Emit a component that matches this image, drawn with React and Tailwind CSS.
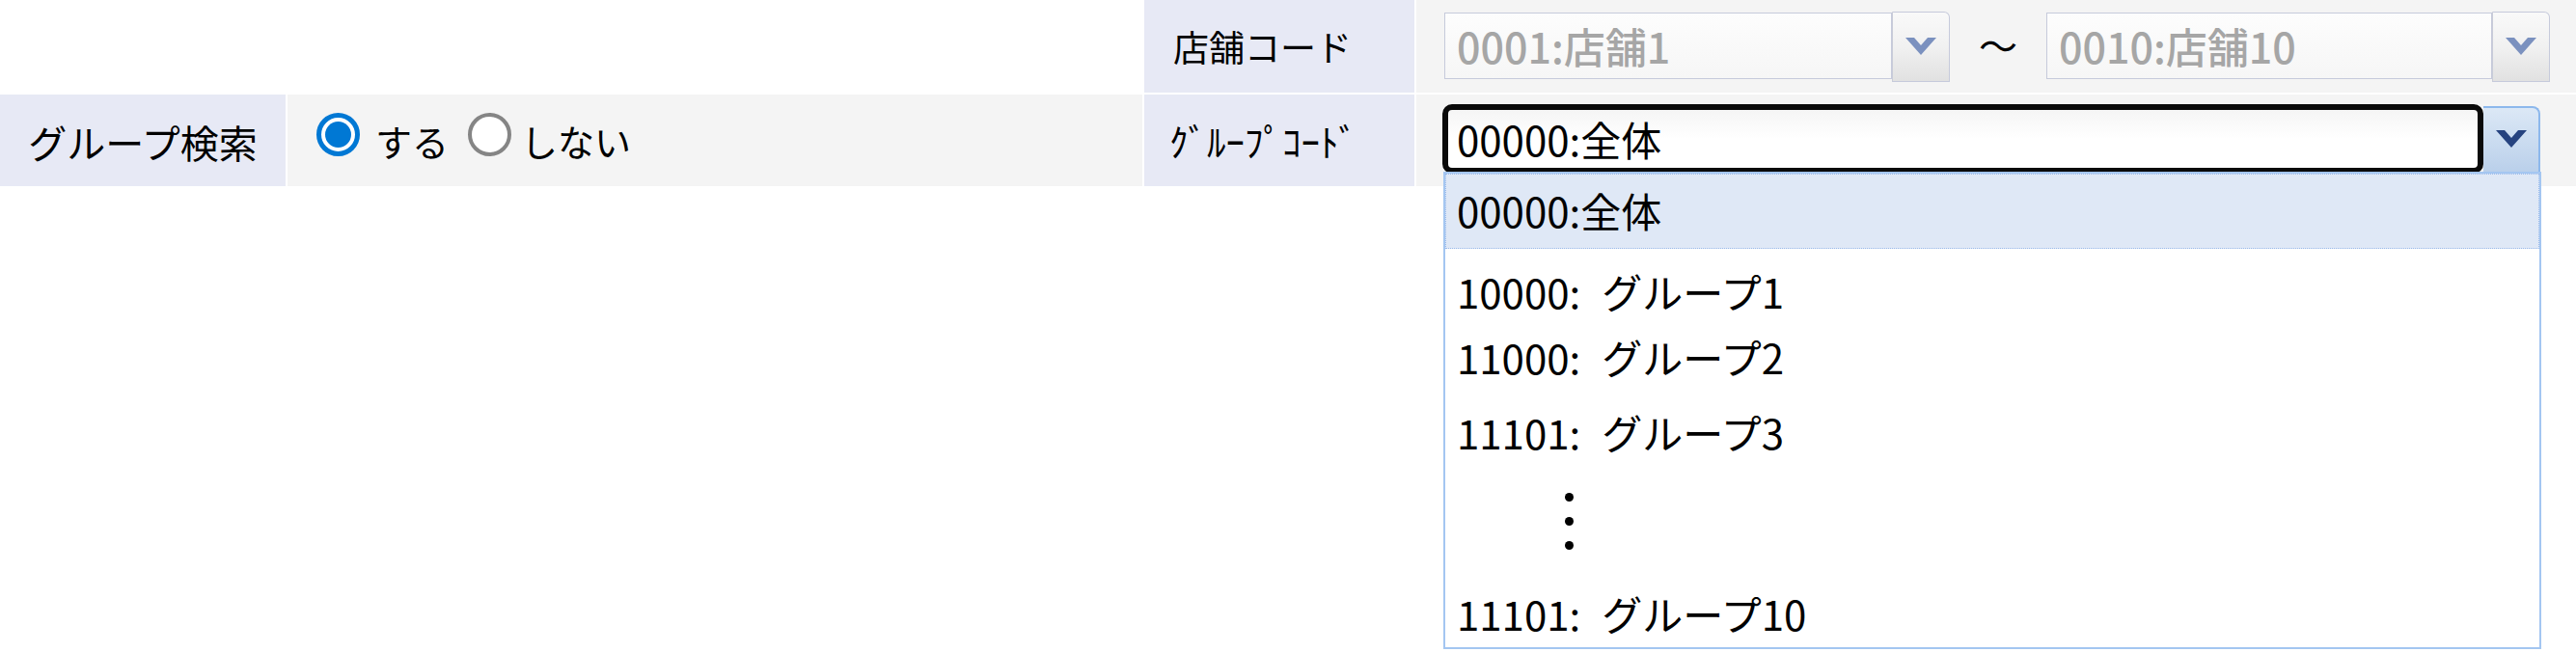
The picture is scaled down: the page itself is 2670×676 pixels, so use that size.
import React from "react";

function Chevron({ color }) {
  return (
    <svg width="32" height="18" viewBox="0 0 32 18">
      <path d="M0 0 L9 0 L16 8 L23 0 L32 0 L16 18 Z" fill={color} />
    </svg>
  );
}

function GraySelect({ text, inputW }) {
  return (
    <div className="flex items-start">
      <div
        className="mt-[1px] h-[69px] border border-[#c6cadb] bg-linear-to-b from-[#fdfdfd] to-[#f6f6f6] flex items-center pl-[12px] text-[43px] text-[#a6a6a6] font-medium leading-none"
        style={{ width: inputW }}
      >
        {text}
      </div>
      <div className="w-[60px] h-[73px] border border-[#c6cadb] border-l-[#c9ccd8] rounded-tr-[6px] bg-linear-to-b from-[#f9f9f9] via-[#f1f1f1] to-[#e1e1e1] flex items-center justify-center pb-[2px]">
        <Chevron color="#7b91bf" />
      </div>
    </div>
  );
}

function Radio({ checked }) {
  if (checked) {
    return (
      <div className="w-[45px] h-[45px] rounded-full border-[5px] border-[#0078d4] bg-white flex items-center justify-center shrink-0">
        <div className="w-[27px] h-[27px] rounded-full bg-[#0078d4]" />
      </div>
    );
  }
  return (
    <div className="w-[45px] h-[45px] rounded-full border-[4px] border-[#858585] bg-white shrink-0" />
  );
}

export default function App() {
  return (
    <div className="relative w-[2670px] h-[676px] bg-white text-black font-['Noto_Sans_CJK_JP','Noto_Sans',sans-serif] overflow-hidden">
      {/* Row 1 */}
      <div className="flex h-[96px]">
        <div className="w-[1186px] bg-white" />
        <div className="w-[280px] bg-[#e7e9f5] flex items-center pl-[30px] text-[37px] leading-none">
          店舗コード
        </div>
        <div className="ml-[2px] flex-1 bg-[#f4f4f4] flex items-start pt-[12px] pl-[29px]">
          <GraySelect text="0001:店舗1" inputW={464} />
          <div className="w-[100px] h-[73px] flex items-center justify-center text-[40px] leading-none pb-[6px]">
            〜
          </div>
          <GraySelect text="0010:店舗10" inputW={462} />
        </div>
      </div>

      {/* Row 2 */}
      <div className="mt-[2px] flex h-[95px]">
        <div className="w-[296px] bg-[#e7e9f5] flex items-center justify-center text-[40px] leading-none pt-[2px]">
          グループ検索
        </div>
        <div className="ml-[2px] w-[886px] bg-[#f4f4f4] flex items-center pl-[30px] text-[38px] leading-none">
          <div className="flex items-center mb-[12px]">
            <Radio checked />
          </div>
          <span className="ml-[16px] mr-[20px]">する</span>
          <div className="flex items-center mb-[12px]">
            <Radio checked={false} />
          </div>
          <span className="ml-[10px]">しない</span>
        </div>
        <div className="ml-[2px] w-[280px] bg-[#e7e9f5] flex items-center pl-[26px] text-[39px] leading-none">
          ｸﾞﾙｰﾌﾟｺｰﾄﾞ
        </div>
        <div className="ml-[2px] flex-1 bg-[#f4f4f4] pl-[27px] pt-[10px]">
          <div className="relative flex items-start">
            <div className="w-[1079px] h-[72px] border-[6px] border-[#0a0a0a] rounded-[10px] bg-linear-to-b from-[#f5f5f5] via-white to-white flex items-center pl-[9px] text-[42px] leading-none">
              00000:全体
            </div>
            <div className="mt-[2px] w-[59px] h-[70px] border-t-2 border-r-2 border-[#8db8ec] rounded-tr-[8px] bg-linear-to-b from-[#dce8f6] via-[#cbdcf0] to-[#b9cfea] flex items-center justify-center pb-[4px]">
              <Chevron color="#26437f" />
            </div>

            {/* dropdown list */}
            <div className="absolute left-[1px] top-[70px] w-[1138px] h-[495px] border-2 border-[#a4c6f1] bg-white text-[42px] leading-none z-10">
              <div className="h-[78px] bg-[#dfe8f6] border border-dotted border-[#9cbbea] flex items-center pl-[11px] pb-[2px]">
                00000:全体
              </div>
              <div className="h-[88px] flex items-center pl-[12px]">
                10000:<span className="ml-[22px]">グループ1</span>
              </div>
              <div className="h-[48px] flex items-center pl-[12px]">
                11000:<span className="ml-[22px]">グループ2</span>
              </div>
              <div className="h-[108px] flex items-center pl-[12px]">
                11101:<span className="ml-[22px]">グループ3</span>
              </div>
              <div className="h-[101px] flex flex-col items-start pl-[124px] pt-[9px] gap-[16px]">
                <div className="w-[9px] h-[9px] rounded-full bg-black" />
                <div className="w-[9px] h-[9px] rounded-full bg-black" />
                <div className="w-[9px] h-[9px] rounded-full bg-black" />
              </div>
              <div className="h-[66px] flex items-center pl-[12px]">
                11101:<span className="ml-[22px]">グループ10</span>
              </div>
            </div>
          </div>
        </div>
      </div>
    </div>
  );
}
